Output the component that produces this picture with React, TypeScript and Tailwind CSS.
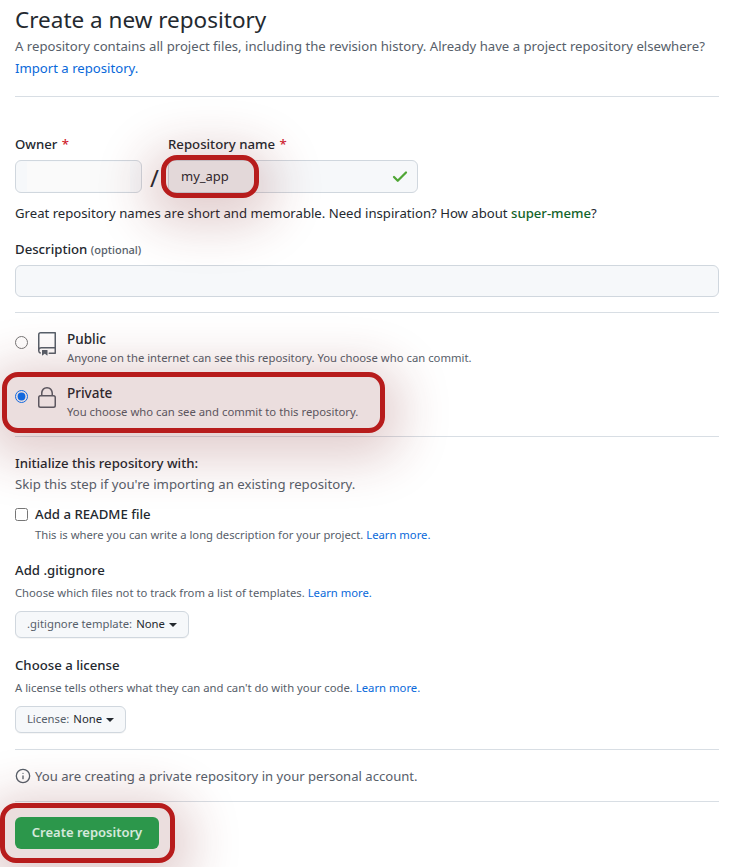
import { Check, Info } from 'lucide-react';

const font = { fontFamily: '"Noto Sans", "Open Sans", sans-serif' };

function Highlight({ className }: { className: string }) {
  return (
    <div
      className={`pointer-events-none absolute z-10 rounded-[16px] border-[5px] border-[#b71c1c] bg-[#7a1f1f]/15 shadow-[0_10px_50px_16px_rgba(122,31,31,0.22)] ${className}`}
    />
  );
}

function Divider({ className }: { className: string }) {
  return <hr className={`border-0 border-t border-[#d8dee4] ${className}`} />;
}

function Required() {
  return <span className="ml-[1px] text-[#cf222e]"> *</span>;
}

function Caret() {
  return <span className="ml-1 inline-block border-x-4 border-t-4 border-x-transparent border-t-[#24292f] align-middle" />;
}

function Select({ label, value, width }: { label: string; value: string; width: string }) {
  return (
    <div className={`flex h-[27px] items-center justify-center rounded-md border border-[#d0d7de] bg-[#f6f8fa] text-[11.3px] shadow-[0_1px_0_rgba(27,31,36,0.04)] ${width}`}>
      <span className="text-[#57606a]">{label}</span>
      <span className="ml-1 text-[#24292f]">{value}</span>
      <Caret />
    </div>
  );
}

function RepoIcon() {
  return (
    <svg viewBox="0 0 24 24" width="24" height="24" fill="#57606a">
      <path d="M3 2.75A2.75 2.75 0 0 1 5.75 0h14.5a.75.75 0 0 1 .75.75v20.5a.75.75 0 0 1-.75.75h-6a.75.75 0 0 1 0-1.5h5.25v-4H6A1.5 1.5 0 0 0 4.5 18v.75c0 .716.43 1.334 1.05 1.605a.75.75 0 0 1-.6 1.374A3.251 3.251 0 0 1 3 18.75ZM19.5 1.5H5.75c-.69 0-1.25.56-1.25 1.25v12.651A2.989 2.989 0 0 1 6 15h13.5Z" />
      <path d="M7 18.25a.25.25 0 0 1 .25-.25h5a.25.25 0 0 1 .25.25v5.01a.25.25 0 0 1-.397.201l-2.206-1.604a.25.25 0 0 0-.294 0L7.397 23.46a.25.25 0 0 1-.397-.2Z" />
    </svg>
  );
}

function LockIcon() {
  return (
    <svg viewBox="0 0 24 24" width="24" height="24" fill="#57606a">
      <path d="M6 9V7.25C6 3.845 8.503 1 12 1s6 2.845 6 6.25V9h.5a2.5 2.5 0 0 1 2.5 2.5v8a2.5 2.5 0 0 1-2.5 2.5h-13A2.5 2.5 0 0 1 3 19.5v-8A2.5 2.5 0 0 1 5.5 9Zm-1.5 2.5v8a1 1 0 0 0 1 1h13a1 1 0 0 0 1-1v-8a1 1 0 0 0-1-1h-13a1 1 0 0 0-1 1Zm3-4.25V9h9V7.25c0-2.67-1.922-4.75-4.5-4.75-2.578 0-4.5 2.08-4.5 4.75Z" />
    </svg>
  );
}

function Visibility({ title, text, icon, checked }: { title: string; text: string; icon: React.ReactNode; checked?: boolean }) {
  return (
    <div className="flex h-[38px] items-start">
      <input type="radio" name="vis" defaultChecked={checked} className="mt-[7px] h-[13px] w-[13px] accent-[#0075ff]" />
      <div className="ml-[7px] mt-[3px]">{icon}</div>
      <div className="ml-[8px]">
        <div className="text-[13.5px] font-medium leading-[20px] text-[#24292f]">{title}</div>
        <div className="text-[11.3px] leading-[18px] text-[#57606a]">{text}</div>
      </div>
    </div>
  );
}

export default function App() {
  return (
    <div style={font} className="h-[867px] w-[736px] overflow-hidden bg-white pl-[15px] pr-[17px] text-[#24292f]">
      <h1 className="pt-[4px] text-[22.5px] leading-[32px] font-normal">Create a new repository</h1>
      <p className="mt-[-1px] text-[13.15px] leading-[22px] text-[#57606a]">
        A repository contains all project files, including the revision history. Already have a project repository elsewhere?{' '}
        <a className="text-[#0969da]">Import a repository.</a>
      </p>
      <Divider className="mt-[17px]" />

      <div className="mt-[37px] flex items-start">
        <div>
          <div className="text-[13.2px] leading-[20px] font-medium">Owner<Required /></div>
          <div className="mt-[6px] flex h-[33px] w-[127px] items-center justify-center rounded-md border border-[#d0d7de] bg-[#f6f8fa]">
            <div className="h-[29px] w-[103px] bg-[#fafafa]" />
          </div>
        </div>
        <span className="mt-[26px] w-[26px] pl-[8px] text-[24px] leading-[36px]">/</span>
        <div>
          <div className="text-[13.2px] leading-[20px] font-medium">Repository name<Required /></div>
          <div className="relative mt-[6px] flex h-[33px] w-[250px] items-center justify-between rounded-md border border-[#d0d7de] bg-[#f6f8fa] pl-[12px] pr-[8px] text-[13px]">
            <span className="text-[#24292f]">my_app</span>
            <Check size={18} strokeWidth={3} className="text-[#4fa635]" />
            <Highlight className="-left-[8px] -top-[6px] h-[43px] w-[98px]" />
          </div>
        </div>
      </div>
      <p className="mt-[7px] text-[13.15px] leading-[20px]">
        Great repository names are short and memorable. Need inspiration? How about{' '}
        <span className="font-medium text-[#116329]">super-meme</span>?
      </p>

      <div className="mt-[16px] text-[13.2px] leading-[20px] font-medium">
        Description <span className="text-[11px] font-medium text-[#57606a]">(optional)</span>
      </div>
      <div className="mt-[5px] h-[32px] w-full rounded-md border border-[#d0d7de] bg-[#f6f8fa]" />
      <Divider className="mt-[15px]" />

      <div className="mt-[16px]">
        <Visibility title="Public" text="Anyone on the internet can see this repository. You choose who can commit." icon={<RepoIcon />} />
      </div>
      <div className="relative mt-[16px]">
        <Visibility title="Private" text="You choose who can see and commit to this repository." icon={<LockIcon />} checked />
        <Highlight className="-left-[13px] -top-[11px] h-[61px] w-[383px]" />
      </div>
      <Divider className="mt-[15px]" />

      <div className="mt-[16px] text-[13.2px] leading-[20px] font-medium">Initialize this repository with:</div>
      <div className="mt-[1px] text-[13.2px] leading-[20px] text-[#57606a]">Skip this step if you're importing an existing repository.</div>

      <div className="mt-[10px] flex items-center">
        <input type="checkbox" className="h-[13px] w-[13px]" />
        <span className="ml-[7px] text-[13.2px] leading-[20px] font-medium">Add a README file</span>
      </div>
      <div className="ml-[20px] mt-[1px] text-[11.25px] leading-[20px] text-[#57606a]">
        This is where you can write a long description for your project. <a className="text-[#0969da]">Learn more.</a>
      </div>

      <div className="mt-[15px] text-[13.2px] leading-[20px] font-medium">Add .gitignore</div>
      <div className="mt-[3px] text-[11.25px] leading-[20px] text-[#57606a]">
        Choose which files not to track from a list of templates. <a className="text-[#0969da]">Learn more.</a>
      </div>
      <div className="mt-[8px]"><Select label=".gitignore template:" value="None" width="w-[174px]" /></div>

      <div className="mt-[17px] text-[13.2px] leading-[20px] font-medium">Choose a license</div>
      <div className="mt-[3px] text-[11.3px] leading-[20px] text-[#57606a]">
        A license tells others what they can and can't do with your code. <a className="text-[#0969da]">Learn more.</a>
      </div>
      <div className="mt-[8px]"><Select label="License:" value="None" width="w-[111px]" /></div>

      <Divider className="mt-[16px]" />
      <div className="mt-[16px] flex items-center text-[13.1px] leading-[20px] text-[#57606a]">
        <Info size={16} className="mr-[4px]" />
        You are creating a private repository in your personal account.
      </div>
      <Divider className="mt-[15px]" />

      <div className="relative mt-[15px] w-[144px]">
        <button className="relative z-20 h-[32px] w-full rounded-md bg-[#2c974b] text-[13px] font-semibold text-white/80">Create repository</button>
        <Highlight className="-left-[15px] -top-[14px] h-[60px] w-[175px]" />
      </div>
    </div>
  );
}
